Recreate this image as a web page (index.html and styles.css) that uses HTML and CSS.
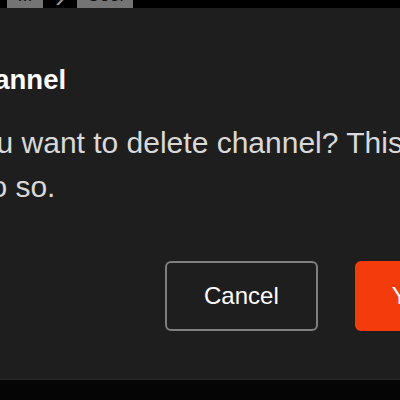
FILE: index.html
```html
<!DOCTYPE html>
<html lang="en">
<head>
    <meta charset="UTF-8">
    <meta name="viewport" content="width=device-width, initial-scale=1.0">
    <title>Delete channel</title>
    <link rel="stylesheet" href="styles.css">
</head>
<body>
    <div class="crumbs">
        <span class="crumb">...</span>
        <span class="crumb-sep">&rsaquo;</span>
        <span class="crumb">Ceol</span>
    </div>

    <div class="dialog">
        <h2 class="dialog-title">Delete channel</h2>
        <p class="dialog-text">Would you want to delete channel? This is OK if you<br>wish to do so.</p>
        <div class="dialog-actions">
            <button class="btn btn-cancel">Cancel</button>
            <button class="btn btn-danger">Yes</button>
        </div>
    </div>
</body>
</html>
```

FILE: styles.css
```css
body {
    font-family: "Liberation Sans", Arial, sans-serif;
    background-color: #050505;
    margin: 0;
    overflow: hidden;
}
.crumbs {
    height: 8px;
    background: #000;
    display: flex;
    align-items: flex-end;
    padding-left: 7px;
    overflow: hidden;
}
.crumb {
    flex: none;
    height: 28px;
    line-height: 30px;
    background: #747474;
    color: #111;
    font-size: 18px;
    text-align: center;
}
.crumb:first-child {
    width: 36px;
}
.crumb:last-child {
    width: 56px;
}
.crumb-sep {
    flex: none;
    width: 34px;
    text-align: center;
    color: #9a9a9a;
    font-size: 28px;
    line-height: 28px;
    margin-bottom: -4px;
}
.dialog {
    box-sizing: border-box;
    width: 664px;
    margin-left: -160px;
    padding: 56px 32px 49px;
    height: 372px;
    background: #1e1e1e;
    border-bottom: 1px solid #2a2a2a;
}
.dialog-title {
    margin: 0;
    font-size: 27.5px;
    line-height: 32px;
    font-weight: bold;
    color: #fff;
}
.dialog-text {
    margin: 25px 0 0;
    font-size: 30px;
    line-height: 44px;
    color: #d9d9d9;
    white-space: nowrap;
}
.dialog-actions {
    display: flex;
    gap: 37px;
    margin-top: 52px;
    padding-left: 293px;
}
.btn {
    box-sizing: border-box;
    height: 70px;
    padding: 0 37px;
    border-radius: 6px;
    font-family: inherit;
    font-size: 24px;
    color: #fff;
    cursor: pointer;
}
.btn-cancel {
    background: transparent;
    border: 2px solid #7f7f7f;
}
.btn-danger {
    background: #f43b0c;
    border: none;
}
```
